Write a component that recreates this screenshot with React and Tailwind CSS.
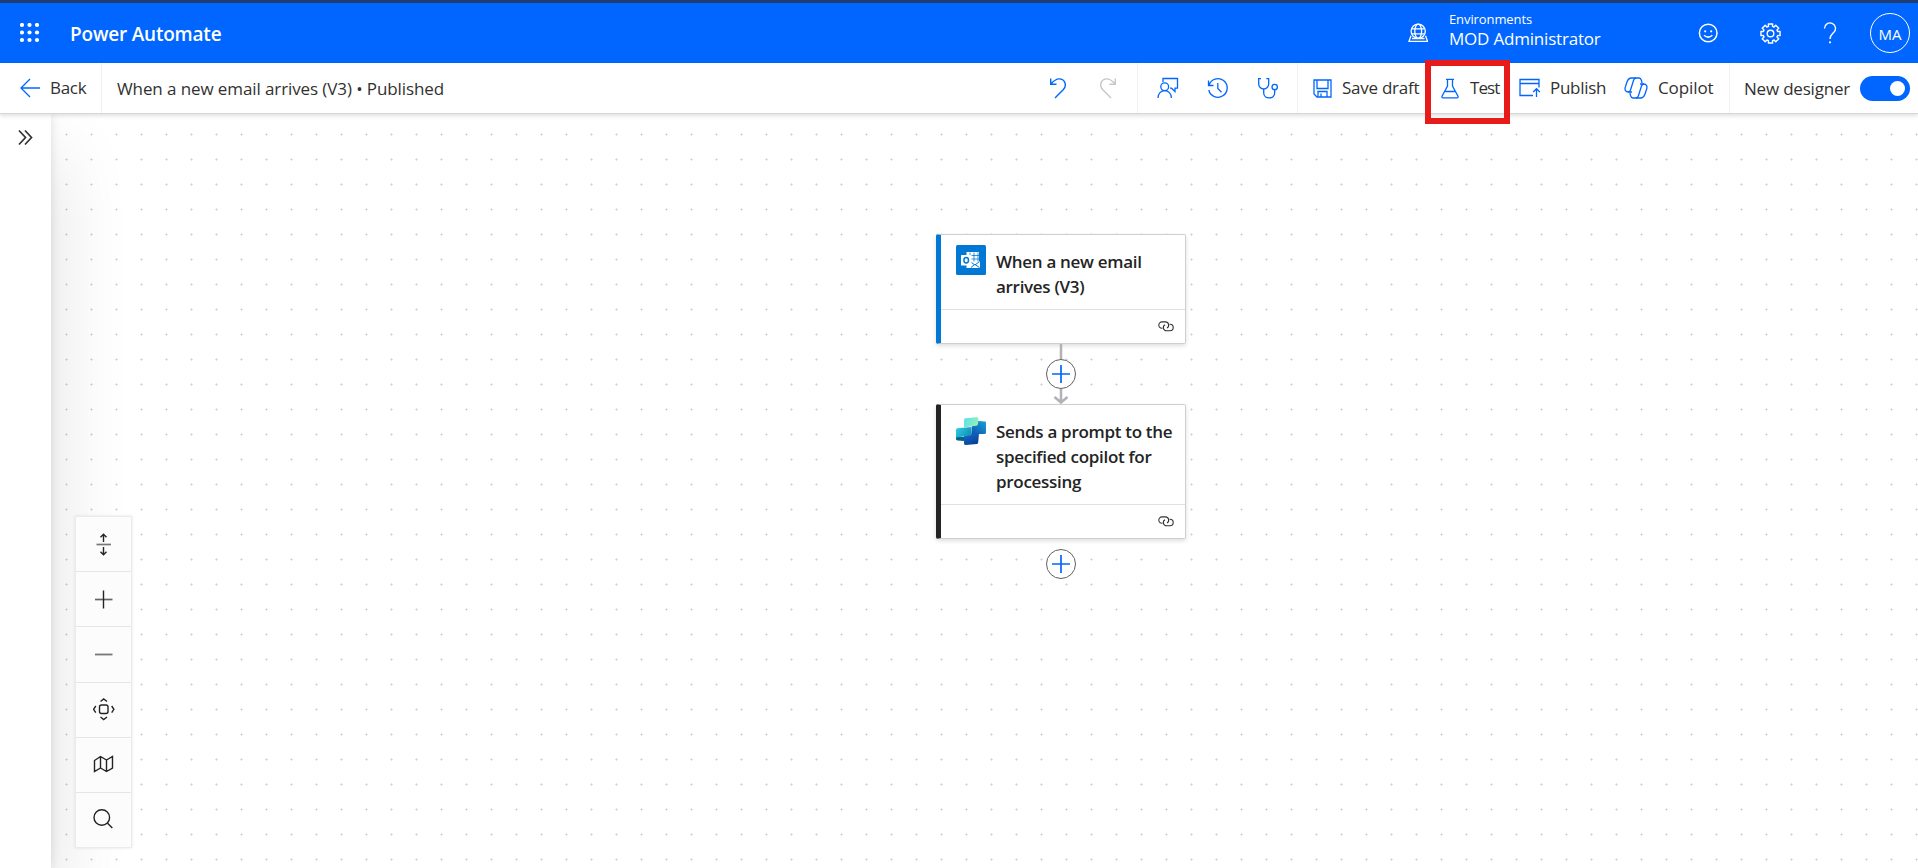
import React from "react";

function Svg({ w, h, className = "", sw = 1.3, children }) {
  return (
    <svg width={w} height={h} viewBox={`0 0 ${w} ${h}`} className={`block shrink-0 ${className}`} fill="none" stroke="currentColor" strokeWidth={sw}>
      {children}
    </svg>
  );
}

function TopBar() {
  return (
    <header className="flex h-[63px] shrink-0 items-center border-t-[3px] border-[#1f3d70] bg-[#0066ff] pl-5 pr-2 text-white">
      <Svg w={20} h={20} className="-mt-px">
        {[2, 9.5, 17].map((y) => [2, 9.5, 17].map((x) => <circle key={`${x}-${y}`} cx={x} cy={y} r="2.1" fill="white" stroke="none" />))}
      </Svg>
      <span className="ml-[30px] mt-[2px] whitespace-nowrap text-[19px] font-semibold tracking-[-0.2px]">Power Automate</span>
      <div className="ml-auto flex items-center">
        <Svg w={20} h={20} sw={1.3}>
          <circle cx="10.2" cy="8.3" r="7.1" />
          <ellipse cx="10.2" cy="8.3" rx="3.4" ry="7.1" />
          <path d="M3.8 5.8h12.8M3.8 10.8h12.8" />
          <path d="M3 12.800 1 18.300h18.500l-2-5.500M4 15.500h12.500" />
        </Svg>
        <div className="mb-[6px] ml-[21px] flex w-[249px] flex-col">
          <span className="self-start whitespace-nowrap text-[13px] leading-[18px] tracking-[-0.1px]">Environments</span>
          <span className="self-start whitespace-nowrap text-[17px] leading-[22px] tracking-[-0.2px]">MOD Administrator</span>
        </div>
        <Svg w={20} h={20} sw={1.5}>
          <circle cx="10.2" cy="10" r="8.8" />
          <circle cx="7.2" cy="8.3" r="1.1" fill="currentColor" stroke="none" />
          <circle cx="13.2" cy="8.3" r="1.1" fill="currentColor" stroke="none" />
          <path d="M6 12.200q4.200 3.800 8.400 0" />
        </Svg>
        <Gear />
        <Svg w={14} h={22} className="ml-[42px]" sw={1.4}>
          <path d="M1.500 6.500a5.500 5.500 0 1 1 9.400 3.800C8.600 12.500 7 13.500 7 17" />
          <circle cx="7" cy="20.3" r="1.1" fill="currentColor" stroke="none" />
        </Svg>
        <div className="ml-[33px] flex h-10 w-10 items-center justify-center rounded-full border border-white text-[15px]">
          <span className="mt-[3px]">MA</span>
        </div>
      </div>
    </header>
  );
}

function Gear() {
  const pts = [];
  for (let i = 0; i < 8; i++) {
    const a = (i * Math.PI) / 4;
    [[-0.28, 7.4], [-0.22, 9.8], [0.22, 9.8], [0.28, 7.4]].forEach(([d, r]) =>
      pts.push(`${(10.5 + r * Math.cos(a + d)).toFixed(2)},${(10.5 + r * Math.sin(a + d)).toFixed(2)}`)
    );
  }
  return (
    <Svg w={21} h={21} className="ml-[42px]" sw={1.4}>
      <polygon points={pts.join(" ")} strokeLinejoin="round" />
      <circle cx="10.5" cy="10.5" r="3.3" />
    </Svg>
  );
}

function CommandBar() {
  return (
    <div className="relative z-20 flex h-[51px] shrink-0 items-stretch border-b border-[#d6d6d6] bg-white text-[17px] tracking-[-0.1px] text-[#323130] shadow-[0_2px_4px_rgba(0,0,0,0.12)]">
      <div className="flex w-[102px] items-center border-r border-[#f0f0f0] pl-5">
        <Svg w={21} h={20} className="text-[#0066ff]"><path d="M20 10H1M10 1 1 10l9 9" /></Svg>
        <span className="ml-[9px] tracking-[-0.3px]">Back</span>
      </div>
      <span className="ml-[15px] mt-[2px] self-center whitespace-nowrap">When a new email arrives (V3) • Published</span>
      <div className="ml-auto flex items-center text-[#0066ff]">
        <Svg w={18} h={22} sw={1.4}><path d="M1.700 1.500v5.700h5.800M1.700 7.200C5 3.500 7.500 1.900 10 1.900c5.800 0 8.300 6.400 4.400 10.600L6 21" /></Svg>
        <Svg w={18} h={22} sw={1.4} className="ml-8 text-[#c8c6c4]"><path d="M16.300 1.500v5.700h-5.800M16.300 7.200C13 3.500 10.500 1.900 8 1.900c-5.800 0-8.300 6.400-4.400 10.600L12 21" /></Svg>
      </div>
      <div className="ml-5 flex items-center border-x border-[#f0f0f0] text-[#0066ff]">
        <Svg w={22} h={22} className="ml-[19px]">
          <path d="M6 5V1.500h14.500v9.700H18v3.300L14.500 11.200H13" />
          <circle cx="7.7" cy="9.8" r="3.9" />
          <path d="M1 21c0-4.500 3-7.300 6.700-7.300s6.700 2.800 6.700 7.300" />
        </Svg>
        <Svg w={22} h={22} className="ml-7">
          <path d="M1.500 3.500v5h5M2 8.200A9.300 9.300 0 1 1 1.800 13M10.800 6v5.500l3.700 3.700" />
        </Svg>
        <Svg w={22} h={22} className="ml-7 mr-[18px]">
          <path d="M4 1.700H1.700V7a5 5 0 0 0 10 0V1.700H9.300M6.700 12v4c0 6.500 11 6.500 11 0v-3" />
          <circle cx="17.7" cy="10" r="2.7" />
        </Svg>
      </div>
      <div className="flex w-[127px] items-center pl-[15px]">
        <Svg w={19} h={19} className="text-[#0066ff]">
          <path d="M1 1h17v17H4l-3-3zM4 1v8.500h11V1M5 18v-5.500h9V18M8 18v-3.500" />
        </Svg>
        <span className="ml-[10px] whitespace-nowrap tracking-[-0.25px]">Save draft</span>
      </div>
      <div className="relative flex w-[85px] items-center pl-4">
        <Svg w={18} h={21} className="text-[#0066ff]">
          <path d="M5 1.300h8M6.500 1.300V8L1 18.300q-.5 1.500 1 1.500h14q1.500 0 1-1.500L11.500 8V1.300M4.500 13.500h9" />
        </Svg>
        <span className="ml-[11px] tracking-[-0.9px]">Test</span>
        <div className="absolute -top-[3px] left-0 h-16 w-[85px] border-[6px] border-[#e81b1b]" />
      </div>
      <div className="flex w-[114px] items-center pl-[9px]">
        <Svg w={22} h={20} className="text-[#0066ff]">
          <path d="M14 17.500H1V1.500h19v8M1 5.500h19M17.500 19v-8M14.200 14l3.300-3.300 3.300 3.300" />
        </Svg>
        <span className="ml-[9px] tracking-[-0.3px]">Publish</span>
      </div>
      <div className="flex w-[106px] items-center border-r border-[#f0f0f0]">
        <CopilotGlyph />
        <span className="ml-[10px]">Copilot</span>
      </div>
      <div className="flex w-[188px] items-center pl-[14px]">
        <span className="mt-[2px] whitespace-nowrap tracking-[-0.2px]">New designer</span>
        <div className="ml-auto mr-2 flex h-[25px] w-[50px] items-center justify-end rounded-full bg-[#0066ff] pr-[5px]">
          <div className="h-[15px] w-[15px] rounded-full bg-white" />
        </div>
      </div>
    </div>
  );
}

function CopilotGlyph() {
  return (
    <Svg w={24} h={22} className="text-[#0066ff]">
      <path d="M8 15H4.500C1 15 .5 12 1.500 9.500L3 5c1-3 2-4 4.500-4H15c1.500 0 2 .8 2.500 2.500L18 6" />
      <path d="M16 7h3.500c3.500 0 4 3 3 5.500L21 17c-1 3-2 4-4.500 4H9c-1.500 0-2-.8-2.500-2.500L6 16" />
      <path d="M12 1c-1.500 0-2 1-2.500 2.500L6.500 13c-.5 1.500-1 2-2.500 2M12 21c1.500 0 2-1 2.500-2.500L17.500 9c.5-1.500 1-2 2.500-2" />
    </Svg>
  );
}

function ZoomButtons() {
  const icons = [
    <><path d="M3.500 11.500h14.500" stroke="#777" strokeWidth="1.7" /><path d="M10.500 9V1.500M7.500 4.200l3-3 3 3M10.500 14v7.500M7.500 18.800l3 3 3-3" /></>,
    <><path d="M2 11.500h17.500" stroke="#666" strokeWidth="1.7" /><path d="M10.500 2.500v18" /></>,
    <path d="M2 11.500h17.500" stroke="#777" strokeWidth="1.8" />,
    <><rect x="6.5" y="7" width="8.5" height="8.5" rx="2" /><path d="M7.500 3.500l3.200-2.500L14 3.500M7.500 19l3.200 2.500L14 19M2.800 8 .6 11.300l2.200 3.300M18.700 8l2.200 3.300-2.200 3.300" /></>,
    <path d="M1.500 7.500v11l6-3.500 6 3.500 6-3.500V3.500l-6 3.500-6-3.500zM7.500 3.500V15M13.500 7v11.500" />,
    <><circle cx="8.8" cy="9.5" r="7.8" /><path d="M14.300 15l5 5" /></>,
  ];
  return (
    <div className="flex h-[332px] w-[57px] flex-col divide-y divide-[#e6e6e6] border border-[#ebebeb] bg-[#fcfcfc] text-[#242424] shadow-[0_0_3px_rgba(0,0,0,0.1)]">
      {icons.map((icon, i) => (
        <div key={i} className="flex flex-1 items-center justify-center">
          <Svg w={22} h={23} sw={1.4}>{icon}</Svg>
        </div>
      ))}
    </div>
  );
}

function OutlookIcon() {
  return (
    <svg width="30" height="30" viewBox="0 0 30 30" className="block shrink-0">
      <rect width="30" height="30" rx="1.5" fill="#0078d4" />
      <path d="M10.500 7H23v9l1 .5V23H10.500z" fill="#fff" />
      <path d="M14 7.500v9M18 7.500v9M22 7.500v9M11 10.500h12M11 14h12" stroke="#0078d4" strokeWidth=".8" />
      <path d="M14 16.500l5 3.500 4.500-3.500M15 22.500l3.500-3M23.500 22.500L19 19.500" stroke="#0078d4" strokeWidth="1" fill="none" />
      <rect x="5" y="10" width="10.5" height="10.5" rx=".5" fill="#fff" />
      <ellipse cx="10.2" cy="15.2" rx="2.3" ry="2.7" fill="none" stroke="#0078d4" strokeWidth="1.5" />
    </svg>
  );
}

function StudioIcon() {
  return (
    <svg width="30" height="28" viewBox="0 0 30 28" className="mt-[2px] block shrink-0">
      <defs>
        <linearGradient id="sa" x1="0" y1="0" x2="1" y2="0.3"><stop offset="0" stopColor="#5ce0f5" /><stop offset="1" stopColor="#8ff0b8" /></linearGradient>
        <linearGradient id="sb" x1="0" y1="0" x2="1" y2="0.5"><stop offset="0" stopColor="#2bd0e0" /><stop offset="1" stopColor="#1492bd" /></linearGradient>
        <linearGradient id="sc" x1="1" y1="0" x2="0.3" y2="1"><stop offset="0" stopColor="#1ba0d8" /><stop offset="1" stopColor="#0a55b0" /></linearGradient>
        <linearGradient id="sd" x1="0" y1="0" x2="0.6" y2="1"><stop offset="0" stopColor="#1470d0" /><stop offset="1" stopColor="#0a3f96" /></linearGradient>
      </defs>
      <path d="M0 20l8 0v4l-6.500-.5Q0 23.300 0 22z" fill="#0c5f8c" />
      <path d="M16 8l6-4 7 .500q1 .100 1 1v10q0 1.300-1.200 1.400L22 17l-7 3z" fill="url(#sc)" />
      <path d="M8 19l15-3-.8 9.500q-.2 1.500-1.500 1.600L10 28q-2 0-2-1.500z" fill="url(#sd)" />
      <path d="M0 13q0-1.500 1.500-1.700L15.500 10 15 17q-.100 1.600-1.700 1.800L0 20.500z" fill="url(#sb)" />
      <path d="M8 3q0-1.500 1.500-1.700L20.500.2q2-.2 2 1.500L22 7q-.200 1.600-1.700 1.800L8 10.500z" fill="url(#sa)" />
    </svg>
  );
}

function Card({ accent, icon, lines, height }) {
  return (
    <div className={`flex w-[250px] flex-col rounded-[2px] border border-l-[5px] border-[#cfcfcf] bg-white shadow-[0_2px_4px_rgba(0,0,0,0.13)] ${accent} ${height}`}>
      <div className="flex flex-1 items-start pl-[15px] pt-[10px]">
        {icon}
        <div className="ml-[10px] mt-[4px] flex flex-col items-start text-[17px] font-semibold leading-[25px] tracking-[-0.3px] text-[#242424]">
          {lines.map((t) => <span key={t} className="whitespace-nowrap">{t}</span>)}
        </div>
      </div>
      <div className="flex h-[34px] items-center justify-end border-t border-[#e0e0e0] pr-[11px] text-[#333]">
        <Svg w={16} h={11} sw={1.1}>
          <path d="M4.500 7.300H4A3.200 3.200 0 0 1 4 .9h3.500a3.200 3.200 0 0 1 1.500 6" />
          <path d="M11.500 3.300H12a3.200 3.200 0 0 1 0 6.400H8.500a3.200 3.200 0 0 1-1.500-6" />
        </Svg>
      </div>
    </div>
  );
}

function AddButton({ className = "" }) {
  return (
    <div className={`flex h-[30px] w-[30px] shrink-0 items-center justify-center rounded-full border border-[#616161] bg-white text-[#0066ff] ${className}`}>
      <Svg w={18} h={18} sw={1.7}><path d="M9 0v18M0 9h18" /></Svg>
    </div>
  );
}

function Flow() {
  return (
    <div className="flex w-[250px] flex-col items-center">
      <Card accent="border-l-[#0078d4]" height="h-[110px]" icon={<OutlookIcon />} lines={["When a new email", "arrives (V3)"]} />
      <div className="flex h-[60px] flex-col items-center text-[#b1b1b7]">
        <Svg w={16} h={15} sw={2.5}><path d="M8 0v15" /></Svg>
        <AddButton />
        <Svg w={16} h={15} sw={2.5}><path d="M8 0v13.500M1.500 8l6.500 5.500L14.500 8" /></Svg>
      </div>
      <Card accent="border-l-[#242424]" height="h-[135px]" icon={<StudioIcon />} lines={["Sends a prompt to the", "specified copilot for", "processing"]} />
      <AddButton className="mt-[10px]" />
    </div>
  );
}

export default function App() {
  return (
    <div className="flex h-[868px] w-[1918px] flex-col overflow-hidden bg-white font-['Open_Sans','Noto_Sans',sans-serif]">
      <TopBar />
      <CommandBar />
      <main className="flex min-h-0 flex-1">
        <aside className="z-10 w-[51px] shrink-0 bg-white pl-[18px] pt-[15px] text-[#323130] shadow-[0_0_10px_rgba(0,0,0,0.12),0_40px_80px_rgba(0,0,0,0.14)]">
          <Svg w={16} h={17} sw={1.7}><path d="M1 1.500 7.500 8.500 1 15.500M7 1.500l6.500 7L7 15.500" /></Svg>
        </aside>
        <section className="flex min-w-0 flex-1 items-start bg-[radial-gradient(circle,#d0d0d0_0.8px,transparent_1.3px)] bg-[length:25px_25px] bg-[position:3px_8px]">
          <div className="z-10 ml-[24px] mt-[402px]"><ZoomButtons /></div>
          <div className="ml-[804px] mt-[120px]"><Flow /></div>
        </section>
      </main>
    </div>
  );
}
